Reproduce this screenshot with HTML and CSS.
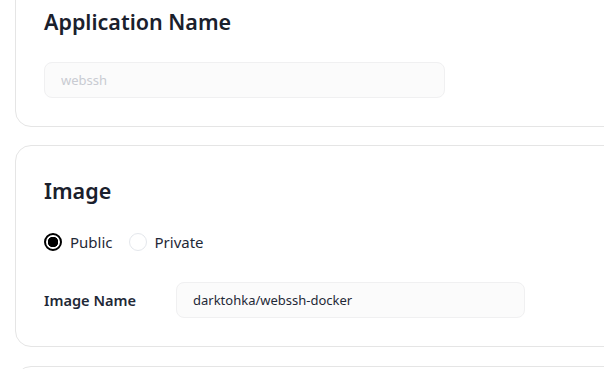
FILE: index.html
```html
<!DOCTYPE html>
<html>
<head>
<meta charset="utf-8">
<link rel="stylesheet" href="styles.css">
</head>
<body>
<main class="stack">
  <section class="card card-first">
    <h2 class="card-title">Application Name</h2>
    <input class="field field-wide" type="text" placeholder="webssh">
  </section>
  <section class="card">
    <h2 class="card-title title-image">Image</h2>
    <div class="radios">
      <label class="radio"><span class="dot dot-on"></span><span>Public</span></label>
      <label class="radio"><span class="dot"></span><span>Private</span></label>
    </div>
    <div class="row">
      <span class="row-label">Image Name</span>
      <input class="field field-mid" type="text" value="darktohka/webssh-docker">
    </div>
  </section>
  <section class="card card-next"></section>
</main>
</body>
</html>
```
FILE: styles.css
```css
html, body {
  margin: 0;
  padding: 0;
  background: #ffffff;
  overflow: hidden;
  width: 604px;
  height: 369px;
}
body {
  font-family: "Noto Sans", "Open Sans", sans-serif;
  color: #1f2937;
}
.stack {
  display: flex;
  flex-direction: column;
  gap: 18px;
  margin-left: 15px;
  margin-top: -30px;
  width: 640px;
}
.card {
  border: 1px solid #e5e5e5;
  border-radius: 16px;
  padding: 28px 28px 28px 28px;
  background: #fff;
}
.card-first {
  padding-top: 36px;
}
.card-next {
  height: 60px;
  margin-top: 1px;
}
.card-title {
  margin: 0;
  font-size: 21.5px;
  line-height: 30px;
  font-weight: 600;
  color: #1a202c;
}
.field {
  display: block;
  box-sizing: border-box;
  height: 36px;
  border: 1px solid #f0f0f1;
  border-radius: 8px;
  background: #fbfbfb;
  font-family: inherit;
  font-size: 13px;
  color: #1f2937;
  padding: 0 16px;
  outline: none;
}
.field::placeholder {
  color: #c9cbd2;
}
.field-wide {
  width: 401px;
  margin-top: 25px;
}
.title-image {
  margin-top: 2px;
}
.radios {
  display: flex;
  gap: 16px;
  margin-top: 26px;
  font-size: 15px;
  line-height: 20px;
}
.radio {
  display: flex;
  align-items: center;
  gap: 8px;
}
.dot {
  box-sizing: border-box;
  width: 18px;
  height: 18px;
  border-radius: 50%;
  border: 1px solid #e4e7ec;
  background: #fff;
}
.dot-on {
  border: 2px solid #000;
  background: radial-gradient(circle, #000 0 5px, #fff 5.5px);
}
.row {
  display: flex;
  align-items: center;
  margin-top: 30px;
}
.row-label {
  width: 132px;
  font-size: 14.6px;
  font-weight: 600;
  color: #1f2937;
}
.field-mid {
  width: 349px;
}
```
